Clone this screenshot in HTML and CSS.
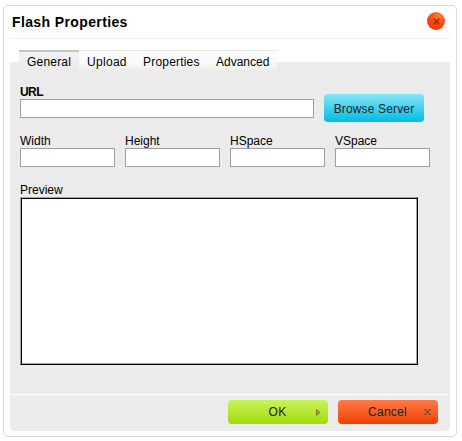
FILE: index.html
```html
<!DOCTYPE html>
<html lang="en">
<head>
<meta charset="utf-8">
<title>Flash Properties</title>
<link rel="stylesheet" href="styles.css">
</head>
<body>
<div class="dialog">
  <header class="title">
    <h1>Flash Properties</h1>
    <button class="close" aria-label="Close"><svg width="7" height="7" viewBox="0 0 7 7"><path d="M.7.7l5.6 5.6M6.3.7L.7 6.3"/></svg></button>
  </header>
  <nav class="tabs">
    <a class="tab active">General</a>
    <a class="tab upload">Upload</a>
    <a class="tab props">Properties</a>
    <a class="tab adv">Advanced</a>
  </nav>
  <main class="contents">
    <div class="row">
      <label class="field url"><b>URL</b><input type="text"></label>
      <button class="btn browse">Browse Server</button>
    </div>
    <div class="row sizes">
      <label class="field"><span>Width</span><input type="text"></label>
      <label class="field"><span>Height</span><input type="text"></label>
      <label class="field"><span>HSpace</span><input type="text"></label>
      <label class="field"><span>VSpace</span><input type="text"></label>
    </div>
    <div class="preview-label">Preview</div>
    <div class="preview"></div>
  </main>
  <footer class="footer">
    <button class="btn ok"><span>OK</span><svg width="5" height="7" viewBox="0 0 5 7"><path d="M.5 .5v6L4 3.5z"/></svg></button>
    <button class="btn cancel"><span>Cancel</span><svg width="7" height="6" viewBox="0 0 7 6"><path d="M0 .5h1.5L3.5 3l2-2.5H7M0 5.5h1.5L3.5 3l2 2.5H7"/></svg></button>
  </footer>
</div>
</body>
</html>
```
FILE: styles.css
```css
* { box-sizing: border-box; }
body {
  margin: 0;
  padding: 5px 0 0 3px;
  background: #fff;
  color: #000;
  font: 12px/14px "Liberation Sans", Arial, sans-serif;
}
button, input { font: inherit; margin: 0; }
.dialog {
  width: 454px;
  height: 432px;
  padding: 0 6px;
  border: 1px solid #d9d9d9;
  border-radius: 5px;
  display: flex;
  flex-direction: column;
}
.title {
  height: 33px;
  margin-left: -1px;
  border-bottom: 1px solid #eee;
  display: flex;
  justify-content: space-between;
  padding: 6px 5px 0 3px;
}
h1 { margin: 2px 0 0; font-size: 14px; line-height: 16px; letter-spacing: .38px; }
.close {
  width: 18px;
  height: 18px;
  padding: 0;
  border: 0;
  border-radius: 50%;
  background: radial-gradient(circle at 65% 20%, #ff7a35, #ff4310 55%, #fb2800);
  display: flex;
  align-items: center;
  justify-content: center;
}
.close svg { fill: none; stroke: #a02b08; stroke-width: 1.6; }
.tabs {
  height: 21px;
  margin: 11px 0 0 9px;
  display: flex;
  z-index: 1;
}
.tab {
  padding: 4px 0 0 8px;
  border-top: 1px solid #e9e9e9;
  background: linear-gradient(#fcfcfc, #fafafa 60%, #ebebeb);
}
.active {
  width: 60px;
  padding-top: 3px;
  border-top: 2px solid #c4c4c4;
  background: linear-gradient(#f3f3f3, #ededed 60%, #ebebeb);
  letter-spacing: .2px;
}
.upload { width: 56px; letter-spacing: .3px; }
.props { width: 73px; letter-spacing: .2px; }
.adv { width: 69px; }
.contents {
  width: 440px;
  height: 332px;
  margin-top: -9px;
  padding: 23px 10px 0;
  background: #ebebeb;
  border-radius: 2px 2px 0 0;
}
.row { display: flex; gap: 10px; }
.contents .row:first-child { height: 33px; }
.field { display: flex; flex-direction: column; width: 95px; }
.url { width: 294px; }
.url b { letter-spacing: -.6px; }
.field input {
  width: 100%;
  height: 19px;
  border: 1px solid #a0a0a0;
  border-radius: 0;
  background: #fff;
  outline: 0;
}
.sizes { margin-top: 16px; }
.btn {
  width: 100px;
  height: 24px;
  padding: 0;
  border: 0;
  border-radius: 4px;
  color: #222;
  letter-spacing: .25px;
}
.browse {
  height: 28px;
  margin-top: 9px;
  padding-top: 2px;
  letter-spacing: .15px;
  background: linear-gradient(#86e6fa, #00bce1);
}
.preview-label { margin-top: 16px; }
.preview {
  width: 398px;
  height: 168px;
  border: 1px solid;
  border-color: #a5a5a5 #000 #000 #a5a5a5;
  box-shadow: inset 1px 1px #000, inset -1px -1px #a5a5a5;
  background: #fff;
}
.footer {
  width: 440px;
  height: 36px;
  margin-top: 1px;
  padding: 5px 12px 0;
  background: #ebebeb;
  border-radius: 0 0 5px 5px;
  display: flex;
  justify-content: flex-end;
  gap: 10px;
}
.ok, .cancel { display: grid; grid-template-columns: 78px 22px; align-items: center; }
.ok { background: linear-gradient(#caf35c, #a0dc0a); }
.cancel { background: linear-gradient(#ff7b49, #f04000); }
.ok span, .cancel span { padding-left: 21px; }
.footer svg { margin-left: 10px; }
.cancel svg { margin-left: 8px; fill: none; stroke: #7e4a20; stroke-width: 1.1; }
.ok path { fill: #b09a4c; stroke: #756c2c; stroke-width: .8; }
```
